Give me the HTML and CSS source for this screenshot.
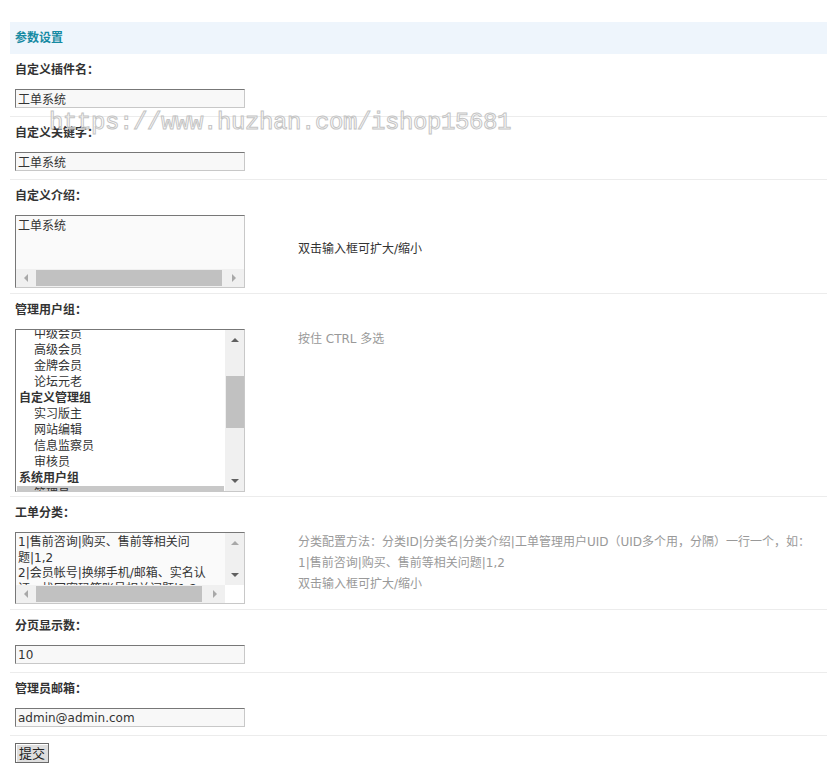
FILE: index.html
```html
<!DOCTYPE html>
<html lang="zh-CN">
<head>
  <meta charset="UTF-8" />
  <title>参数设置</title>
  <link rel="stylesheet" href="styles.css">
</head>
<body>
  <div class="title">参数设置</div>

  <div class="sec">
    <div class="sec-label">自定义插件名：</div>
    <div class="sec-body">
      <div class="field"><input class="txt" type="text" value="工单系统"></div>
    </div>
  </div>

  <div class="sec">
    <div class="sec-label">自定义关键字：</div>
    <div class="sec-body">
      <div class="field"><input class="txt" type="text" value="工单系统"></div>
    </div>
  </div>

  <div class="sec">
    <div class="sec-label">自定义介绍：</div>
    <div class="sec-body pb5">
      <div class="field">
        <div class="box intro">
          <div class="box-text">工单系统</div>
          <div class="hscroll">
            <span class="sbtn"><i class="arr left off"></i></span>
            <span class="hthumb"></span>
            <span class="sbtn"><i class="arr right off"></i></span>
          </div>
        </div>
      </div>
      <div class="hint dark">双击输入框可扩大/缩小</div>
    </div>
  </div>

  <div class="sec">
    <div class="sec-label">管理用户组：</div>
    <div class="sec-body pb4">
      <div class="field">
        <div class="box listbox">
          <div class="list">
            <div class="list-inner">
              <div class="opt">中级会员</div>
              <div class="opt">高级会员</div>
              <div class="opt">金牌会员</div>
              <div class="opt">论坛元老</div>
              <div class="grp">自定义管理组</div>
              <div class="opt">实习版主</div>
              <div class="opt">网站编辑</div>
              <div class="opt">信息监察员</div>
              <div class="opt">审核员</div>
              <div class="grp">系统用户组</div>
              <div class="opt selected">管理员</div>
            </div>
          </div>
          <div class="vscroll">
            <span class="sbtn"><i class="arr up"></i></span>
            <span class="track"><span class="vthumb"></span></span>
            <span class="sbtn"><i class="arr down"></i></span>
          </div>
        </div>
      </div>
      <div class="hint">按住 CTRL 多选</div>
    </div>
  </div>

  <div class="sec">
    <div class="sec-label">工单分类：</div>
    <div class="sec-body pb5">
      <div class="field">
        <div class="box types">
          <div class="types-text">
            <div>1|售前咨询|购买、售前等相关问</div>
            <div>题|1,2</div>
            <div>2|会员帐号|换绑手机/邮箱、实名认</div>
            <div>证、找回密码等账号相关问题|1,2</div>
          </div>
          <div class="vscroll">
            <span class="sbtn"><i class="arr up off"></i></span>
            <span class="track"></span>
            <span class="sbtn"><i class="arr down"></i></span>
          </div>
          <div class="hscroll">
            <span class="sbtn"><i class="arr left off"></i></span>
            <span class="hthumb short"></span>
            <span class="sbtn"><i class="arr right off"></i></span>
          </div>
          <div class="corner"></div>
        </div>
      </div>
      <div class="hint">
        分类配置方法：分类ID|分类名|分类介绍|工单管理用户UID（UID多个用，分隔）一行一个，如：<br>
        1|售前咨询|购买、售前等相关问题|1,2<br>
        双击输入框可扩大/缩小
      </div>
    </div>
  </div>

  <div class="sec">
    <div class="sec-label">分页显示数：</div>
    <div class="sec-body">
      <div class="field"><input class="txt" type="text" value="10"></div>
    </div>
  </div>

  <div class="sec">
    <div class="sec-label">管理员邮箱：</div>
    <div class="sec-body">
      <div class="field"><input class="txt" type="text" value="admin@admin.com"></div>
    </div>
  </div>

  <div class="submit-row">
    <button class="btn" type="submit">提交</button>
  </div>

  <div class="watermark">https://www.huzhan.com/ishop15681</div>
</body>
</html>
```

FILE: styles.css
```css
body {
  margin: 0;
  padding: 22px 0 0 10px;
  font-family: "DejaVu Sans", "Noto Sans CJK SC", sans-serif;
  font-size: 12px;
  color: #333;
  background: #fff;
  position: relative;
}

.title {
  height: 32px;
  line-height: 32px;
  padding-left: 5px;
  background: #eef5fc;
  color: #168aa3;
  font-weight: bold;
}

.sec {
  border-bottom: 1px solid #ececec;
}

.sec-label {
  padding: 8px 5px 0;
  line-height: 16px;
  font-weight: bold;
}

.sec-body {
  display: flex;
  padding: 11px 5px 8px;
}

.sec-body.pb5 {
  padding-bottom: 5px;
}

.sec-body.pb4 {
  padding-bottom: 4px;
}

.field {
  width: 283px;
  flex: none;
}

.hint {
  color: #999;
  line-height: 21px;
}

.hint.dark {
  color: #333;
  padding-top: 24px;
}

.txt {
  display: block;
  width: 230px;
  height: 19px;
  box-sizing: border-box;
  margin: 0;
  padding: 0 2px;
  border: 1px solid;
  border-color: #777 #c8c8c8 #c8c8c8 #777;
  background: #f8f8f8;
  font-family: "DejaVu Sans", "Noto Sans CJK SC", sans-serif;
  font-size: 12px;
  color: #333;
  outline: none;
}

.box {
  width: 230px;
  box-sizing: border-box;
  border: 1px solid;
  border-color: #777 #c8c8c8 #c8c8c8 #777;
  background: #fafafa;
  overflow: hidden;
}

/* scrollbars */
.hscroll {
  display: grid;
  grid-template-columns: 20px 1fr 20px;
  height: 18px;
  background: #f0f0f0;
}

.vscroll {
  display: grid;
  grid-template-rows: 20px 1fr 20px;
  width: 19px;
  background: #f0f0f0;
}

.sbtn {
  display: flex;
  align-items: center;
  justify-content: center;
}

.hthumb {
  margin: 1px 2px 1px 0;
  background: #c1c1c1;
}

.hthumb.short {
  margin-right: 3px;
}

.track {
  display: block;
}

.vthumb {
  display: block;
  height: 52px;
  margin: 26px 0 0 1px;
  background: #c1c1c1;
}

.arr {
  width: 0;
  height: 0;
  border: 4px solid transparent;
}

.arr.up {
  border-top: 0;
  border-bottom-color: #606060;
}

.arr.down {
  border-bottom: 0;
  border-top-color: #606060;
}

.arr.left {
  border-left: 0;
  border-right-color: #606060;
}

.arr.right {
  border-right: 0;
  border-left-color: #606060;
}

.arr.off.up { border-bottom-color: #a8a8a8; }
.arr.off.down { border-top-color: #a8a8a8; }
.arr.off.left { border-right-color: #a8a8a8; }
.arr.off.right { border-left-color: #a8a8a8; }

/* intro textarea */
.intro {
  display: flex;
  flex-direction: column;
  height: 73px;
}

.box-text {
  flex: 1;
  padding: 2px 2px 0;
  line-height: 16px;
}

/* user group list */
.listbox {
  display: flex;
  height: 163px;
  background: #fff;
}

.list {
  flex: 1;
  overflow: hidden;
}

.list-inner {
  margin-top: -4px;
  line-height: 16px;
}

.grp {
  padding-left: 3px;
  font-weight: bold;
}

.opt {
  padding-left: 18px;
}

.opt.selected {
  margin: 0 1px;
  padding-left: 17px;
  background: #c8c8c8;
}

/* work order types */
.types {
  display: grid;
  grid-template-columns: 1fr 19px;
  grid-template-rows: 52px 18px;
  height: 72px;
}

.types-text {
  overflow: hidden;
  padding: 2px 2px 0;
  line-height: 15.5px;
  white-space: nowrap;
}

.corner {
  background: #fff;
}

.submit-row {
  padding: 7px 5px;
}

.btn {
  width: 34px;
  height: 20px;
  padding: 0;
  border: 1px solid #6a6a6a;
  background: #dedede;
  box-shadow: inset 1px 1px #fff;
  font-family: "Noto Sans CJK SC", sans-serif;
  font-size: 13px;
  color: #222;
  line-height: 16px;
}

.watermark {
  position: absolute;
  top: 109px;
  left: 49px;
  font-family: "Liberation Mono", monospace;
  font-size: 24px;
  letter-spacing: -0.4px;
  line-height: 28px;
  color: rgba(255, 255, 255, 0.5);
  -webkit-text-stroke: 1px #c4c4c4;
  pointer-events: none;
}
```
